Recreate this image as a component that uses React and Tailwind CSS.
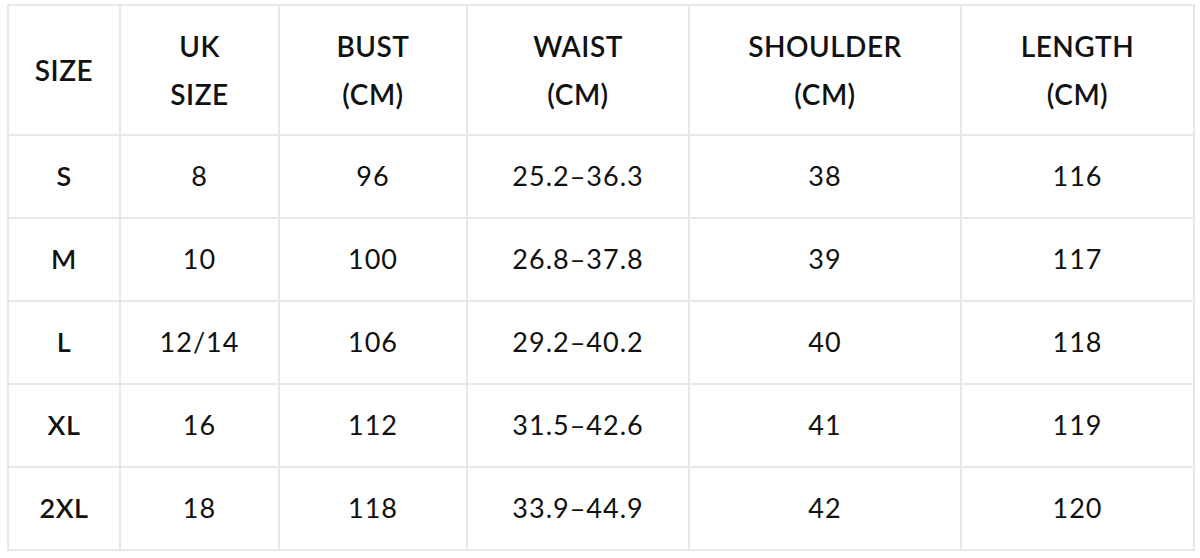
import React from 'react';

const columns = [
  { key: 'size', label: ['SIZE'], width: 'w-[112px]' },
  { key: 'uk', label: ['UK', 'SIZE'], width: 'w-[159px]' },
  { key: 'bust', label: ['BUST', '(CM)'], width: 'w-[188px]' },
  { key: 'waist', label: ['WAIST', '(CM)'], width: 'w-[222px]' },
  { key: 'shoulder', label: ['SHOULDER', '(CM)'], width: 'w-[272px]' },
  { key: 'length', label: ['LENGTH', '(CM)'], width: 'w-[233px]' },
];

const rows = [
  { size: 'S', uk: '8', bust: '96', waist: '25.2–36.3', shoulder: '38', length: '116' },
  { size: 'M', uk: '10', bust: '100', waist: '26.8–37.8', shoulder: '39', length: '117' },
  { size: 'L', uk: '12/14', bust: '106', waist: '29.2–40.2', shoulder: '40', length: '118' },
  { size: 'XL', uk: '16', bust: '112', waist: '31.5–42.6', shoulder: '41', length: '119' },
  { size: '2XL', uk: '18', bust: '118', waist: '33.9–44.9', shoulder: '42', length: '120' },
];

const App = () => (
  <div className="min-h-[558px] bg-white pt-[4px] pl-[7px] font-['Lato',sans-serif] text-[#111]">
    <table className="w-[1186px] table-fixed border-collapse">
      <colgroup>
        {columns.map(col => (
          <col key={col.key} className={col.width} />
        ))}
      </colgroup>
      <thead>
        <tr className="h-[130px]">
          {columns.map(col => (
            <th
              key={col.key}
              scope="col"
              className="border-2 border-[#e8e8e8] p-0 text-center align-middle text-[28px] font-semibold leading-[48px] tracking-[0.5px]"
            >
              {col.label.map(line => (
                <div key={line}>{line}</div>
              ))}
            </th>
          ))}
        </tr>
      </thead>
      <tbody>
        {rows.map(row => (
          <tr key={row.size} className="h-[83px]">
            {columns.map(col => (
              <td
                key={col.key}
                className={
                  col.key === 'size'
                    ? 'border-2 border-[#e8e8e8] p-0 text-center align-middle text-[27px] font-semibold tracking-[0.5px]'
                    : 'border-2 border-[#e8e8e8] p-0 text-center align-middle text-[27px] font-normal tracking-[1px]'
                }
              >
                {row[col.key]}
              </td>
            ))}
          </tr>
        ))}
      </tbody>
    </table>
  </div>
);

export default App;
